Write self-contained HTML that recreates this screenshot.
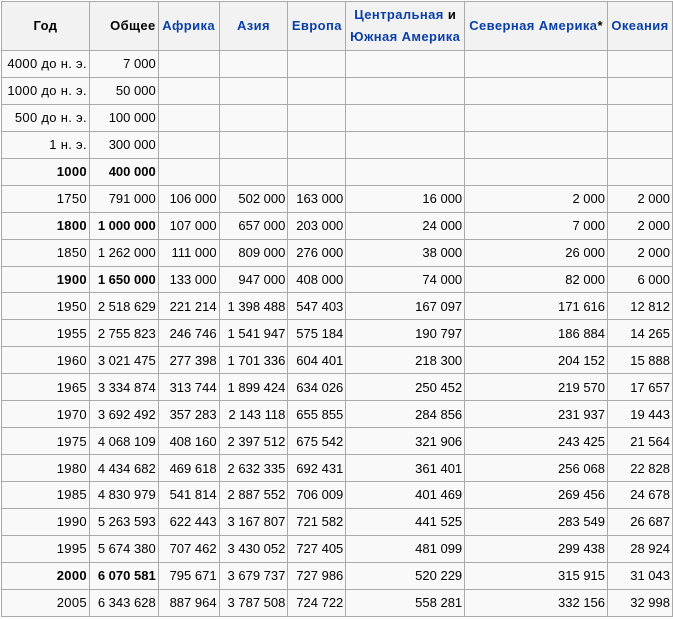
<!DOCTYPE html>
<html><head><meta charset="utf-8"><style>
html,body{margin:0;padding:0;background:#fff;}
table{position:absolute;left:1px;top:1px;border-collapse:collapse;table-layout:fixed;font-family:"Liberation Sans",Arial,sans-serif;font-size:13px;color:#000;background:#f9f9f9;}
td,th{border:1px solid #aaa;padding:0 2px 0 2px;text-align:right;white-space:nowrap;overflow:hidden;height:26.94px;box-sizing:border-box;}
th{background:#f2f2f2;text-align:center;font-weight:bold;height:49px;line-height:22px;letter-spacing:0.4px;}
td:first-child{letter-spacing:0.3px;}
th.l{color:#0b3fa8;}
th span{color:#000}
tr.b td:nth-child(-n+2){font-weight:bold;}
</style></head><body>
<table>
<colgroup><col style="width:88px"><col style="width:69px"><col style="width:61px"><col style="width:69px"><col style="width:58px"><col style="width:119px"><col style="width:143px"><col style="width:65px"></colgroup>
<tr><th>Год</th><th style="text-align:right">Общее</th><th class="l">Африка</th><th class="l">Азия</th><th class="l">Европа</th><th class="l">Центральная <span>и</span><br>Южная Америка</th><th class="l">Северная Америка<span>*</span></th><th class="l">Океания</th></tr>
<tr><td>4000 до н. э.</td><td>7 000</td><td></td><td></td><td></td><td></td><td></td><td></td></tr>
<tr><td>1000 до н. э.</td><td>50 000</td><td></td><td></td><td></td><td></td><td></td><td></td></tr>
<tr><td>500 до н. э.</td><td>100 000</td><td></td><td></td><td></td><td></td><td></td><td></td></tr>
<tr><td>1 н. э.</td><td>300 000</td><td></td><td></td><td></td><td></td><td></td><td></td></tr>
<tr class="b"><td>1000</td><td>400 000</td><td></td><td></td><td></td><td></td><td></td><td></td></tr>
<tr><td>1750</td><td>791 000</td><td>106 000</td><td>502 000</td><td>163 000</td><td>16 000</td><td>2 000</td><td>2 000</td></tr>
<tr class="b"><td>1800</td><td>1 000 000</td><td>107 000</td><td>657 000</td><td>203 000</td><td>24 000</td><td>7 000</td><td>2 000</td></tr>
<tr><td>1850</td><td>1 262 000</td><td>111 000</td><td>809 000</td><td>276 000</td><td>38 000</td><td>26 000</td><td>2 000</td></tr>
<tr class="b"><td>1900</td><td>1 650 000</td><td>133 000</td><td>947 000</td><td>408 000</td><td>74 000</td><td>82 000</td><td>6 000</td></tr>
<tr><td>1950</td><td>2 518 629</td><td>221 214</td><td>1 398 488</td><td>547 403</td><td>167 097</td><td>171 616</td><td>12 812</td></tr>
<tr><td>1955</td><td>2 755 823</td><td>246 746</td><td>1 541 947</td><td>575 184</td><td>190 797</td><td>186 884</td><td>14 265</td></tr>
<tr><td>1960</td><td>3 021 475</td><td>277 398</td><td>1 701 336</td><td>604 401</td><td>218 300</td><td>204 152</td><td>15 888</td></tr>
<tr><td>1965</td><td>3 334 874</td><td>313 744</td><td>1 899 424</td><td>634 026</td><td>250 452</td><td>219 570</td><td>17 657</td></tr>
<tr><td>1970</td><td>3 692 492</td><td>357 283</td><td>2 143 118</td><td>655 855</td><td>284 856</td><td>231 937</td><td>19 443</td></tr>
<tr><td>1975</td><td>4 068 109</td><td>408 160</td><td>2 397 512</td><td>675 542</td><td>321 906</td><td>243 425</td><td>21 564</td></tr>
<tr><td>1980</td><td>4 434 682</td><td>469 618</td><td>2 632 335</td><td>692 431</td><td>361 401</td><td>256 068</td><td>22 828</td></tr>
<tr><td>1985</td><td>4 830 979</td><td>541 814</td><td>2 887 552</td><td>706 009</td><td>401 469</td><td>269 456</td><td>24 678</td></tr>
<tr><td>1990</td><td>5 263 593</td><td>622 443</td><td>3 167 807</td><td>721 582</td><td>441 525</td><td>283 549</td><td>26 687</td></tr>
<tr><td>1995</td><td>5 674 380</td><td>707 462</td><td>3 430 052</td><td>727 405</td><td>481 099</td><td>299 438</td><td>28 924</td></tr>
<tr class="b"><td>2000</td><td>6 070 581</td><td>795 671</td><td>3 679 737</td><td>727 986</td><td>520 229</td><td>315 915</td><td>31 043</td></tr>
<tr><td>2005</td><td>6 343 628</td><td>887 964</td><td>3 787 508</td><td>724 722</td><td>558 281</td><td>332 156</td><td>32 998</td></tr>
</table>
</body></html>
